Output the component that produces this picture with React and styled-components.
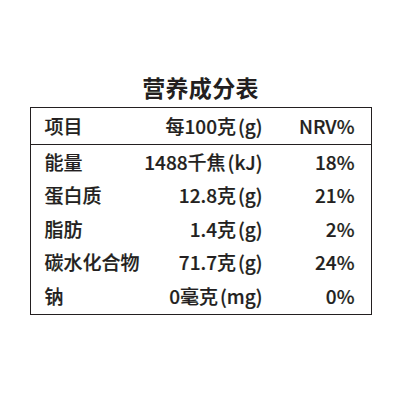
import React from "react";
import styled, { createGlobalStyle } from "styled-components";

const Global = createGlobalStyle`
  html, body { margin: 0; padding: 0; background: #ffffff; }
  body { font-family: "Noto Sans CJK SC", "Noto Sans", sans-serif; color: #231f20; }
`;

const Page = styled.div`
  width: 400px;
  height: 400px;
  display: flex;
  flex-direction: column;
  align-items: flex-start;
  padding-top: 75px;
  box-sizing: border-box;
`;

const Title = styled.h1`
  align-self: center;
  margin: 0 0 8px 1px;
  font-size: 23px;
  line-height: 24px;
  font-weight: 700;
  letter-spacing: 0.3px;
`;

const Table = styled.div`
  margin-left: 30px;
  width: 342px;
  border: 1.5px solid #231f20;
  box-sizing: border-box;
  padding-bottom: 2px;
`;

const Row = styled.div`
  display: grid;
  grid-template-columns: 98px 120px 92px;
  padding: 0 14.5px 0 13.5px;
  height: ${(p) => (p.$head ? "35.5px" : "33.5px")};
  align-items: center;
  border-bottom: ${(p) => (p.$head ? "1.5px solid #231f20" : "none")};
  font-size: 19px;
  font-weight: 500;
  line-height: 1;
`;

const Cell = styled.div`
  text-align: ${(p) => (p.$right ? "right" : "left")};
  white-space: nowrap;
  -webkit-text-stroke: 0.2px #231f20;
`;

const Paren = styled.span`
  margin-left: 2px;
`;

const rows = [
  ["能量", "1488千焦", "kJ", "18%"],
  ["蛋白质", "12.8克", "g", "21%"],
  ["脂肪", "1.4克", "g", "2%"],
  ["碳水化合物", "71.7克", "g", "24%"],
  ["钠", "0毫克", "mg", "0%"],
];

export default function App() {
  return (
    <Page>
      <Global />
      <Title>营养成分表</Title>
      <Table>
        <Row $head>
          <Cell>项目</Cell>
          <Cell $right>
            每100克<Paren>(g)</Paren>
          </Cell>
          <Cell $right>NRV%</Cell>
        </Row>
        {rows.map(([name, val, unit, nrv]) => (
          <Row key={name}>
            <Cell>{name}</Cell>
            <Cell $right>
              {val}
              <Paren>({unit})</Paren>
            </Cell>
            <Cell $right>{nrv}</Cell>
          </Row>
        ))}
      </Table>
    </Page>
  );
}
